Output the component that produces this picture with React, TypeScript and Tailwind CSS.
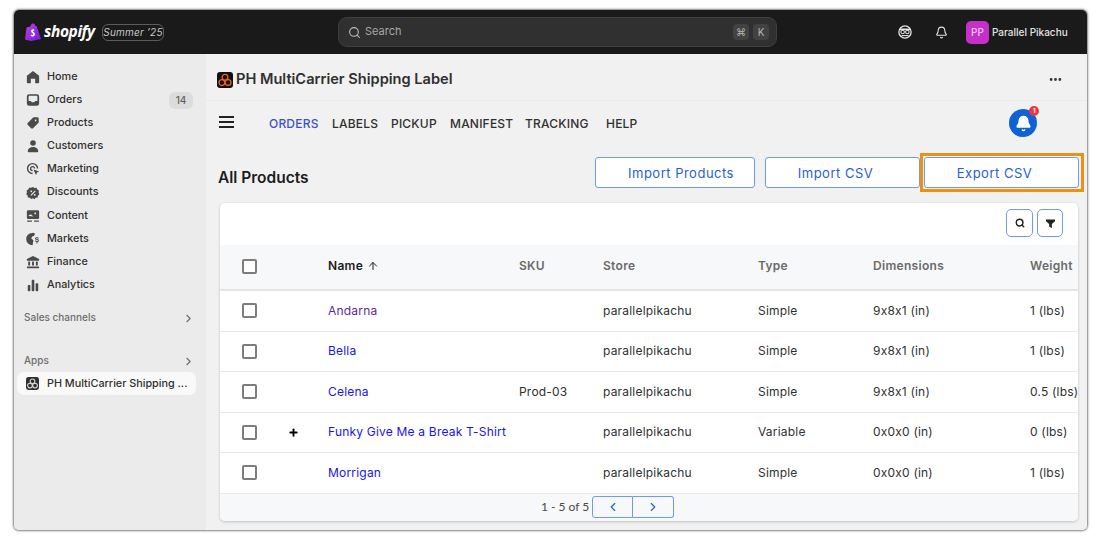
import { ArrowUp, Bell, ChevronLeft, ChevronRight, Search, Ellipsis, Plus } from 'lucide-react';

const font = { fontFamily: 'Inter, "Liberation Sans", sans-serif' };

const NavIcon = ({ children }: { children: React.ReactNode }) => (
    <svg viewBox="0 0 16 16" className="w-[14px] h-[14px] fill-[#4a4a4a]">{children}</svg>
);

const navItems = [
    { label: 'Home', icon: <path d="M8 1 L15 6.5 V14 a1 1 0 0 1 -1 1 H10.5 V10 H5.5 V15 H2 a1 1 0 0 1 -1 -1 V6.5 Z" /> },
    { label: 'Orders', badge: '14', icon: <path fillRule="evenodd" d="M3.5 1.5 h9 a2.5 2.5 0 0 1 2.5 2.5 v8 a2.5 2.5 0 0 1 -2.5 2.5 h-9 a2.5 2.5 0 0 1 -2.5 -2.5 v-8 a2.5 2.5 0 0 1 2.5 -2.5 Z M3 9 h2.5 l1 1.5 h3 l1 -1.5 H13 V4 a.8 .8 0 0 0 -.8 -.8 H3.8 a.8 .8 0 0 0 -.8 .8 Z" /> },
    { label: 'Products', icon: <path fillRule="evenodd" d="M9 1.5 h4 a1.5 1.5 0 0 1 1.5 1.5 v4 a1.5 1.5 0 0 1 -.5 1.1 l-6 6 a1.5 1.5 0 0 1 -2.1 0 l-4 -4 a1.5 1.5 0 0 1 0 -2.1 l6 -6 a1.5 1.5 0 0 1 1.1 -.5 Z M11 4 a1 1 0 1 0 .01 0 Z" /> },
    { label: 'Customers', icon: <><circle cx="8" cy="4.5" r="3.2" /><path d="M2 14 c0 -3.2 2.5 -5 6 -5 s6 1.800 6 5 a1 1 0 0 1 -1 1 H3 a1 1 0 0 1 -1 -1 Z" /></> },
    { label: 'Marketing', icon: <><path fillRule="evenodd" d="M7.500 1 a6.500 6.500 0 0 1 6.500 6.500 h-1.600 a4.900 4.900 0 1 0 -4.900 4.900 V14 a6.500 6.500 0 0 1 0 -13 Z" /><path d="M7.500 4.500 a3 3 0 0 1 3 3 h-1.500 a1.500 1.500 0 1 0 -1.500 1.500 V10.500 a3 3 0 0 1 0 -6 Z" /><path d="M8.500 8.500 L15 10.800 L12.500 12 L11.500 15 Z" /></> },
    { label: 'Discounts', icon: <path fillRule="evenodd" d="M8 1 l1.800 1.200 2.200 -.1 .9 2 1.900 1.100 -.4 2.200 .9 2 -1.600 1.500 -.4 2.200 -2.200 .3 -1.500 1.600 L8 14 l-2.100 .9 -1.500 -1.600 -2.200 -.3 -.4 -2.200 L.2 9.300 l.9 -2 -.4 -2.200 1.900 -1.100 .9 -2 2.200 .1 Z M10.200 5.200 L5.200 10.200 l.9 .9 5 -5 Z M6 5 a1 1 0 1 0 .01 0 Z M10 9 a1 1 0 1 0 .01 0 Z" /> },
    { label: 'Content', icon: <><path fillRule="evenodd" d="M2.500 1.500 h11 a1.500 1.500 0 0 1 1.500 1.500 v7 a1.500 1.500 0 0 1 -1.500 1.500 h-11 A1.500 1.500 0 0 1 1 10 V3 a1.500 1.500 0 0 1 1.500 -1.500 Z M10.500 4 a1 1 0 1 0 .01 0 Z M3 4 v3.500 l2.500 -1.500 3 2.500 L3 8 Z" /><rect x="1" y="13" width="6" height="1.600" rx=".8" /><rect x="9" y="13" width="6" height="1.600" rx=".8" /></> },
    { label: 'Markets', icon: <><path fillRule="evenodd" d="M7 1 a7 7 0 0 1 3.500 .9 L9 4.500 7 5 6 7.500 8.500 9.500 8 12 7.500 15 a7 7 0 0 1 -.5 -14 Z" /><path d="M12.500 6 c1.500 0 2.300 .7 2.300 1.500 h-1.300 c0 -.3 -.4 -.5 -1 -.5 s-1 .2 -1 .5 c0 .8 3.300 .3 3.300 2.300 c0 .9 -.8 1.500 -1.700 1.600 V13 h-1.100 v-1.600 c-1.100 -.2 -1.800 -.8 -1.800 -1.700 h1.300 c0 .4 .5 .7 1.100 .7 s1 -.2 1 -.6 c0 -.9 -3.300 -.4 -3.300 -2.300 c0 -.8 .7 -1.300 1.600 -1.400 Z" /></> },
    { label: 'Finance', icon: <><path d="M8 1 L15 4.500 V6.500 H1 V4.500 Z" /><rect x="2.500" y="7.500" width="2.200" height="4.500" /><rect x="6.900" y="7.500" width="2.200" height="4.500" /><rect x="11.300" y="7.500" width="2.200" height="4.500" /><rect x="1" y="13" width="14" height="2" rx=".5" /></> },
    { label: 'Analytics', icon: <><rect x="2" y="8" width="3" height="7" rx="1" /><rect x="6.500" y="2" width="3" height="13" rx="1" /><rect x="11" y="6" width="3" height="9" rx="1" /></> },
];

const AppLogo = ({ bg, stroke, size }: { bg: string; stroke: string; size: string }) => (
    <svg viewBox="0 0 16 16" className={size}>
        <rect width="16" height="16" rx="3" fill={bg} />
        <g fill="none" stroke={stroke} strokeWidth="1.300">
            <circle cx="8" cy="5.300" r="2.900" />
            <circle cx="4.900" cy="10.600" r="2.900" />
            <circle cx="11.100" cy="10.600" r="2.900" />
        </g>
    </svg>
);

const Checkbox = () => <span className="block w-[15px] h-[15px] rounded-[2px] border-2 border-[#7d7d7d] bg-white" />;

const rows = [
    { name: 'Andarna', color: 'text-[#5b2a9d]', sku: '', dim: '9x8x1 (in)', type: 'Simple', weight: '1 (lbs)', h: 'h-[41px]' },
    { name: 'Bella', color: 'text-[#1a12f0]', sku: '', dim: '9x8x1 (in)', type: 'Simple', weight: '1 (lbs)', h: 'h-[40px]' },
    { name: 'Celena', color: 'text-[#1a12f0]', sku: 'Prod-03', dim: '9x8x1 (in)', type: 'Simple', weight: '0.5 (lbs)', h: 'h-[41px]' },
    { name: 'Funky Give Me a Break T-Shirt', color: 'text-[#1a12f0]', sku: '', dim: '0x0x0 (in)', type: 'Variable', weight: '0 (lbs)', h: 'h-[40px]', plus: true },
    { name: 'Morrigan', color: 'text-[#1a12f0]', sku: '', dim: '0x0x0 (in)', type: 'Simple', weight: '1 (lbs)', h: 'h-[41px]' },
];

const gridCols = 'grid grid-cols-[60px_48px_191px_84px_155px_115px_157px_48px] items-center';

export default function App() {
    return (
        <div style={font} className="bg-white w-[1100px] h-[540px] pt-[10px] pl-[14px] overflow-hidden">
            <div className="w-[1073px] h-[520px] rounded-[5px] overflow-hidden shadow-[0_0_2px_1px_rgba(0,0,0,0.5)] flex flex-col">
                <header className="h-[44px] shrink-0 bg-[#1a1a1a] flex items-center pl-[11px]">
                    <svg viewBox="0 0 16 18" className="w-[16px] h-[18px] shrink-0">
                        <defs>
                            <linearGradient id="bag" x1="0" y1="0" x2="1" y2="1">
                                <stop offset="0" stopColor="#c13ee0" />
                                <stop offset="1" stopColor="#6a22d8" />
                            </linearGradient>
                        </defs>
                        <path d="M1.500 4.500 L5.400 3.500 C5.700 2 6.500 .5 8 .5 C9.500 .5 10 1.800 10.200 2.800 L11.500 3 L16 16 L6 18 L0 16.500 Z" fill="url(#bag)" />
                        <path d="M9 6.500 C7.500 6 6 6.800 6 8.300 C6 10 8.300 10 8.200 11.300 C8 12.300 6.800 12 6 11.500 L5.600 13 C7.500 14 9.900 13.500 9.900 11.200 C9.900 9.300 7.800 9.300 7.900 8.300 C8 7.700 8.600 7.700 9.300 8 Z" fill="#fff" />
                    </svg>
                    <span className="ml-[3px] w-[55px] shrink-0 text-[15.500px] leading-none font-bold italic text-white tracking-[-0.4px]" style={{ fontFamily: '"Open Sans", sans-serif' }}>shopify</span>
                    <span className="ml-[3px] w-[62px] h-[17px] shrink-0 rounded-[6px] border border-[#5c5c5c] flex items-center justify-center text-[10px] italic text-[#c8c8c8] tracking-[0.2px] whitespace-nowrap">Summer ’25</span>
                    <div className="ml-[174px] w-[439px] h-[30px] shrink-0 rounded-[9px] bg-[#303030] border border-[#3f3f3f] flex items-center pl-[9px] pr-[7px]">
                        <Search className="w-[13px] h-[13px] text-[#bdbdbd]" strokeWidth={2} />
                        <span className="ml-[4px] -mt-px text-[11px] text-[#a6a6a6]">Search</span>
                        <span className="ml-auto w-[16px] h-[16px] rounded-[4px] bg-[#424242] flex items-center justify-center text-[10px] text-[#b5b5b5]" style={{ fontFamily: '"DejaVu Sans", sans-serif' }}>⌘</span>
                        <span className="ml-[4px] w-[16px] h-[16px] rounded-[4px] bg-[#424242] flex items-center justify-center text-[10px] text-[#b5b5b5]">K</span>
                    </div>
                    <svg viewBox="0 0 16 16" className="ml-[121px] w-[14px] h-[14px] shrink-0">
                        <circle cx="8" cy="8" r="7" fill="none" stroke="#e3e3e3" strokeWidth="1.500" />
                        <path d="M2 4 H14 V6 H2 Z" fill="#e3e3e3" />
                        <circle cx="5.300" cy="8" r="2" fill="none" stroke="#e3e3e3" strokeWidth="1.200" />
                        <circle cx="10.700" cy="8" r="2" fill="none" stroke="#e3e3e3" strokeWidth="1.200" />
                        <rect x="4" y="11.500" width="8" height="1.200" fill="#e3e3e3" />
                    </svg>
                    <Bell className="ml-[23px] w-[13px] h-[13px] text-[#e3e3e3] shrink-0" strokeWidth={2} />
                    <span className="ml-[18px] w-[23px] h-[23px] shrink-0 rounded-[5px] bg-[#c530c8] flex items-center justify-center text-[10px] font-medium text-[#f0c8f0]">PP</span>
                    <span className="ml-[3px] text-[10px] whitespace-nowrap text-[#e3e3e3] font-medium">Parallel Pikachu</span>
                </header>

                <div className="flex flex-1 min-h-0">
                    <aside className="w-[192px] shrink-0 bg-[#ebebeb] pt-[11.500px] px-[3px]">
                        {navItems.map((item) => (
                            <div key={item.label} className="h-[23.100px] flex items-center pl-[9px] pr-[10px]">
                                <NavIcon>{item.icon}</NavIcon>
                                <span className="ml-[7px] text-[10.800px] font-medium text-[#303030]">{item.label}</span>
                                {item.badge && (
                                    <span className="ml-auto w-[24px] h-[17px] rounded-[6px] bg-[#dcdcdc] flex items-center justify-center text-[10px] font-medium text-[#616161]">{item.badge}</span>
                                )}
                            </div>
                        ))}
                        <div className="mt-[11px] h-[20px] flex items-center justify-between pl-[7px] pr-[8px]">
                            <span className="text-[10px] font-medium text-[#6d6d6d]">Sales channels</span>
                            <ChevronRight className="w-[13px] h-[13px] text-[#6d6d6d] mt-[3px]" strokeWidth={2} />
                        </div>
                        <div className="mt-[23px] h-[20px] flex items-center justify-between pl-[7px] pr-[8px]">
                            <span className="text-[10px] font-medium text-[#6d6d6d]">Apps</span>
                            <ChevronRight className="w-[13px] h-[13px] text-[#6d6d6d] mt-[3px]" strokeWidth={2} />
                        </div>
                        <div className="mt-[1.500px] h-[23px] w-[179px] rounded-[7px] bg-[#f9f9f9] flex items-center pl-[9px] pt-px">
                            <AppLogo bg="#2f2f2f" stroke="#d8d8d8" size="w-[13px] h-[13px]" />
                            <span className="ml-[8px] text-[10.800px] font-medium text-[#303030] whitespace-nowrap">PH MultiCarrier Shipping ...</span>
                        </div>
                    </aside>

                    <main className="flex-1 min-w-0 bg-[#f1f1f1] flex flex-col">
                        <div className="h-[47px] shrink-0 border-b border-[#ebebeb] flex items-center pt-[6px] pl-[11px] pr-[24px]">
                            <AppLogo bg="#111" stroke="#e8602c" size="w-[16px] h-[16px]" />
                            <span className="ml-[3px] text-[14.600px] font-semibold text-[#303030]">PH MultiCarrier Shipping Label</span>
                            <Ellipsis className="ml-auto -mt-px w-[15px] h-[15px] text-[#303030]" strokeWidth={2.500} />
                        </div>

                        <div className="h-[44px] shrink-0 flex items-center pl-[13px] text-[12px] font-medium tracking-[0.2px] text-[#303030]">
                            <div className="flex flex-col gap-[3px] w-[15px] shrink-0 -mt-[2px]">
                                <span className="block h-[2px] bg-[#222]" />
                                <span className="block h-[2px] bg-[#222]" />
                                <span className="block h-[2px] bg-[#222]" />
                            </div>
                            <div className="flex items-center mt-[1px]">
                                <span className="ml-[35px] w-[63px] text-[#3f51c4]">ORDERS</span>
                                <span className="w-[59px]">LABELS</span>
                                <span className="w-[59px]">PICKUP</span>
                                <span className="w-[75px]">MANIFEST</span>
                                <span className="w-[81px]">TRACKING</span>
                                <span>HELP</span>
                            </div>
                            <div className="relative ml-[372px] w-[28px] h-[28px] rounded-full bg-[#0f62d6] flex items-center justify-center">
                                <Bell className="w-[17px] h-[17px] text-white fill-white" strokeWidth={2} />
                                <span className="absolute -top-[3px] -right-[2px] w-[10px] h-[10px] rounded-full bg-[#f0333f] flex items-center justify-center text-[6px] leading-none font-bold text-white">1</span>
                            </div>
                        </div>

                        <div className="mt-[12px] h-[31px] shrink-0 flex items-center pl-[12px] text-[14px]">
                            <span className="mt-[10px] w-[377px] shrink-0 text-[15.500px] font-semibold text-[#1c1c1c]">All Products</span>
                            <button className="w-[160px] h-[31px] shrink-0 rounded-[3px] border border-[#6f9be8] bg-white pl-[12px] pt-[2px] text-[13px] tracking-[0.5px] text-[#1f62d0]">Import Products</button>
                            <button className="ml-[10px] w-[155px] h-[31px] shrink-0 rounded-[3px] border border-[#6f9be8] bg-white pr-[14px] pt-[2px] text-[13px] tracking-[0.5px] text-[#1f62d0]">Import CSV</button>
                            <span className="shrink-0 border-[3px] border-[#f0900f] pl-px pr-[2px] py-px">
                                <button className="block w-[155px] h-[31px] rounded-[3px] border border-[#6f9be8] bg-white pr-[14px] pt-[2px] text-[13px] tracking-[0.5px] text-[#1f62d0]">Export CSV</button>
                            </span>
                        </div>

                        <section className="mt-[15px] ml-[14px] w-[858px] h-[318px] rounded-[5px] bg-white shadow-[0_1px_3px_rgba(0,0,0,0.2)] overflow-hidden flex flex-col">
                            <div className="h-[42px] shrink-0 flex items-center justify-end gap-[4px] pr-[15px] pb-[2px]">
                                <span className="w-[27px] h-[28px] rounded-[5px] border border-[#6f9be8] flex items-center justify-center">
                                    <Search className="w-[10px] h-[10px] text-[#222]" strokeWidth={3.500} />
                                </span>
                                <span className="w-[26px] h-[28px] rounded-[5px] border border-[#6f9be8] flex items-center justify-center">
                                    <svg viewBox="0 0 10 10" className="w-[9px] h-[9px] fill-[#222]"><path d="M0 0.500 H10 V2.500 L6.500 5.500 V10 L3.500 8.500 V5.500 L0 2.500 Z" /></svg>
                                </span>
                            </div>
                            <div className={`${gridCols} h-[46px] shrink-0 bg-[#f7f8fa] border-b-2 border-[#e4e5e9] pb-[2px] text-[12px] font-semibold tracking-[0.3px] text-[#6a6a6a]`}>
                                <span className="pl-[22px]"><Checkbox /></span>
                                <span />
                                <span className="flex items-center gap-[4px] text-[#1c1c1c]">Name <ArrowUp className="w-[12px] h-[12px]" strokeWidth={2} /></span>
                                <span>SKU</span>
                                <span>Store</span>
                                <span>Type</span>
                                <span>Dimensions</span>
                                <span>Weight</span>
                            </div>
                            {rows.map((row) => (
                                <div key={row.name} className={`${gridCols} ${row.h} shrink-0 border-b border-[#e9e9ec] pb-[1px] text-[12px] tracking-[0.2px] text-[#303030] whitespace-nowrap`}>
                                    <span className="pl-[22px]"><Checkbox /></span>
                                    <span className="pl-[8px]">{row.plus && <Plus className="w-[11px] h-[11px] text-black" strokeWidth={4} />}</span>
                                    <span className={row.color}>{row.name}</span>
                                    <span>{row.sku}</span>
                                    <span>parallelpikachu</span>
                                    <span>{row.type}</span>
                                    <span>{row.dim}</span>
                                    <span>{row.weight}</span>
                                </div>
                            ))}
                            <div className="flex-1 bg-[#f7f8fa] flex items-center pl-[321px] pb-[2px]">
                                <span className="text-[12px] text-[#4a4a4a]" style={{ fontFamily: 'Lato, sans-serif' }}>1 - 5 of 5</span>
                                <span className="ml-[3px] w-[41px] h-[22px] rounded-l-[3px] border border-[#6f9be8] flex items-center justify-center">
                                    <ChevronLeft className="w-[14px] h-[14px] text-[#1f62d0]" />
                                </span>
                                <span className="w-[41px] h-[22px] rounded-r-[3px] border border-l-0 border-[#6f9be8] flex items-center justify-center">
                                    <ChevronRight className="w-[14px] h-[14px] text-[#1f62d0]" />
                                </span>
                            </div>
                        </section>
                    </main>
                </div>
            </div>
        </div>
    );
}
